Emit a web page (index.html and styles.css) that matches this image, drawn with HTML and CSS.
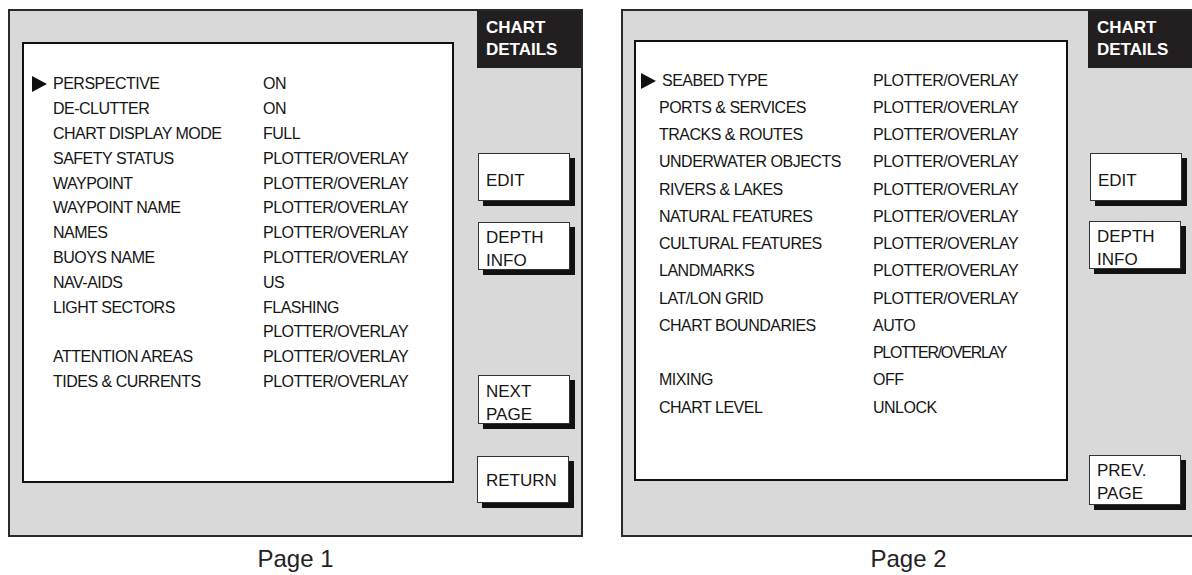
FILE: index.html
```html
<!DOCTYPE html>
<html lang="en">
<head>
    <meta charset="UTF-8">
    <title>Chart details</title>
    <link rel="stylesheet" href="styles.css">
</head>
<body>
    <div class="sheet">
        <div class="figure">
            <div class="panel panel-one">
                <ul class="menu">
                    <li class="menu-row is-current"><span class="menu-label">PERSPECTIVE</span><span class="menu-value">ON</span></li>
                    <li class="menu-row"><span class="menu-label">DE-CLUTTER</span><span class="menu-value">ON</span></li>
                    <li class="menu-row"><span class="menu-label">CHART DISPLAY MODE</span><span class="menu-value">FULL</span></li>
                    <li class="menu-row"><span class="menu-label">SAFETY STATUS</span><span class="menu-value">PLOTTER/OVERLAY</span></li>
                    <li class="menu-row"><span class="menu-label">WAYPOINT</span><span class="menu-value">PLOTTER/OVERLAY</span></li>
                    <li class="menu-row"><span class="menu-label">WAYPOINT NAME</span><span class="menu-value">PLOTTER/OVERLAY</span></li>
                    <li class="menu-row"><span class="menu-label">NAMES</span><span class="menu-value">PLOTTER/OVERLAY</span></li>
                    <li class="menu-row"><span class="menu-label">BUOYS NAME</span><span class="menu-value">PLOTTER/OVERLAY</span></li>
                    <li class="menu-row"><span class="menu-label">NAV-AIDS</span><span class="menu-value">US</span></li>
                    <li class="menu-row"><span class="menu-label">LIGHT SECTORS</span><span class="menu-value">FLASHING</span></li>
                    <li class="menu-row"><span class="menu-label"></span><span class="menu-value">PLOTTER/OVERLAY</span></li>
                    <li class="menu-row"><span class="menu-label">ATTENTION AREAS</span><span class="menu-value">PLOTTER/OVERLAY</span></li>
                    <li class="menu-row"><span class="menu-label">TIDES &amp; CURRENTS</span><span class="menu-value">PLOTTER/OVERLAY</span></li>
                </ul>
                <div class="side">
                    <div class="title">CHART<br>DETAILS</div>
                    <div class="key key-edit">EDIT</div>
                    <div class="key key-depth">DEPTH<br>INFO</div>
                    <div class="key key-next">NEXT<br>PAGE</div>
                    <div class="key key-return">RETURN</div>
                </div>
            </div>
            <div class="caption">Page 1</div>
        </div>

        <div class="figure">
            <div class="panel panel-two">
                <ul class="menu">
                    <li class="menu-row is-current"><span class="menu-label">SEABED TYPE</span><span class="menu-value">PLOTTER/OVERLAY</span></li>
                    <li class="menu-row"><span class="menu-label">PORTS &amp; SERVICES</span><span class="menu-value">PLOTTER/OVERLAY</span></li>
                    <li class="menu-row"><span class="menu-label">TRACKS &amp; ROUTES</span><span class="menu-value">PLOTTER/OVERLAY</span></li>
                    <li class="menu-row"><span class="menu-label">UNDERWATER OBJECTS</span><span class="menu-value">PLOTTER/OVERLAY</span></li>
                    <li class="menu-row"><span class="menu-label">RIVERS &amp; LAKES</span><span class="menu-value">PLOTTER/OVERLAY</span></li>
                    <li class="menu-row"><span class="menu-label">NATURAL FEATURES</span><span class="menu-value">PLOTTER/OVERLAY</span></li>
                    <li class="menu-row"><span class="menu-label">CULTURAL FEATURES</span><span class="menu-value">PLOTTER/OVERLAY</span></li>
                    <li class="menu-row"><span class="menu-label">LANDMARKS</span><span class="menu-value">PLOTTER/OVERLAY</span></li>
                    <li class="menu-row"><span class="menu-label">LAT/LON GRID</span><span class="menu-value">PLOTTER/OVERLAY</span></li>
                    <li class="menu-row"><span class="menu-label">CHART BOUNDARIES</span><span class="menu-value">AUTO</span></li>
                    <li class="menu-row"><span class="menu-label"></span><span class="menu-value menu-value-tight">PLOTTER/OVERLAY</span></li>
                    <li class="menu-row"><span class="menu-label">MIXING</span><span class="menu-value">OFF</span></li>
                    <li class="menu-row"><span class="menu-label">CHART LEVEL</span><span class="menu-value">UNLOCK</span></li>
                </ul>
                <div class="side">
                    <div class="title">CHART<br>DETAILS</div>
                    <div class="key key-edit">EDIT</div>
                    <div class="key key-depth">DEPTH<br>INFO</div>
                    <div class="key key-prev">PREV.<br>PAGE</div>
                </div>
            </div>
            <div class="caption">Page 2</div>
        </div>
    </div>
</body>
</html>
```

FILE: styles.css
```css
*{
    margin: 0;
    padding: 0;
    list-style: none;
    box-sizing: border-box;
}
html, body{
    width: 1192px;
    height: 575px;
    overflow: hidden;
    background: #fff;
}
body{
    font-family: "Liberation Sans", Arial, sans-serif;
    color: #151515;
}
.sheet{
    display: flex;
    gap: 38px;
    padding: 9px 0 0 8px;
    width: 1192px;
    overflow: hidden;
}
.figure{
    display: flex;
    flex-direction: column;
    width: 575px;
    flex: none;
}
.panel{
    display: flex;
    width: 575px;
    height: 528px;
    background: #d9d9d9;
    border: 2px solid #2a2a2a;
}

/* white list box */
.menu{
    flex: none;
    width: 432px;
    height: 441px;
    margin: 31px 0 0 12px;
    padding-top: 28px;
    background: #fff;
    border: 2px solid #111;
    font-size: 16px;
    letter-spacing: -0.5px;
}
.panel-two .menu{
    width: 434px;
    margin: 29px 0 0 11px;
    padding-top: 25px;
}
.menu-row{
    display: grid;
    grid-template-columns: 29px 210px 1fr;
    align-items: center;
    height: 24.8px;
    white-space: nowrap;
}
.panel-two .menu-row{
    grid-template-columns: 23px 214px 1fr;
    height: 27.25px;
}
.menu-row::before{
    content: "";
    display: block;
    width: 0;
    height: 0;
    margin-left: 8px;
}
.panel-two .menu-row::before{
    margin-left: 5px;
}
.menu-row.is-current::before{
    border-left: 15px solid #111;
    border-top: 8px solid transparent;
    border-bottom: 8px solid transparent;
}
.panel-two .menu-row.is-current .menu-label{
    padding-left: 3px;
}
.menu-value-tight{
    letter-spacing: -1.3px;
}

/* right column */
.side{
    flex: 1;
    display: flex;
    flex-direction: column;
    margin-left: 23px;
}
.panel-two .side{
    margin-left: 20px;
}
.title{
    height: 57px;
    padding: 6px 0 0 9px;
    background: #231f20;
    color: #fff;
    font-weight: bold;
    font-size: 17px;
    line-height: 22px;
}
.key{
    display: flex;
    flex-direction: column;
    justify-content: center;
    width: 92px;
    height: 48px;
    margin-left: 1px;
    padding: 6px 0 0 7px;
    background: #fff;
    border: 1px solid #333;
    box-shadow: 5px 5px 0 #111;
    font-size: 17px;
    line-height: 23px;
}
.key-edit{ margin-top: 85px; }
.key-depth{ margin-top: 21px; }
.key-next{ margin-top: 105px; height: 49px; }
.key-return{ margin-top: 32px; height: 47px; margin-left: 0; padding: 2px 0 0 8px; }
.panel-two .key-edit{ margin-left: 2px; }
.panel-two .key-depth{ margin-top: 20px; }
.key-prev{ margin-top: 186px; height: 50px; padding-top: 3px; }

.caption{
    margin-top: 8px;
    text-align: center;
    font-size: 24px;
    line-height: 28px;
    color: #222;
}
```
